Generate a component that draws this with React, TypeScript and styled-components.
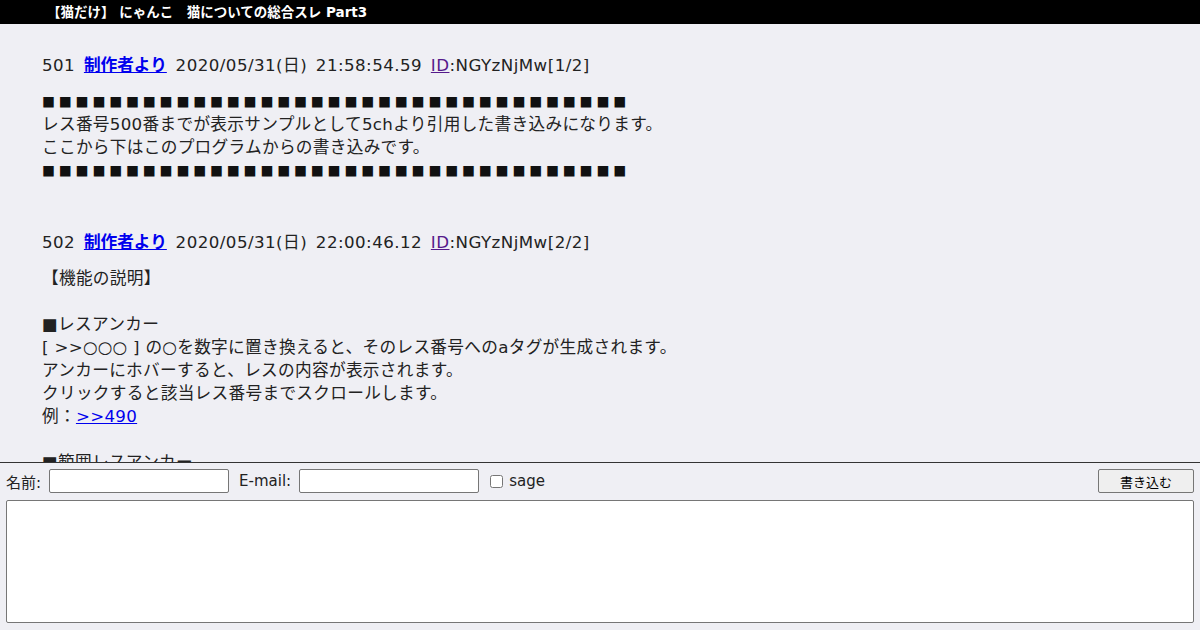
import React from 'react'
import styled, { createGlobalStyle } from 'styled-components'

const GlobalStyle = createGlobalStyle`
  html, body {
    margin: 0;
    padding: 0;
    background: #efeff4;
    color: #222;
    font-family: 'DejaVu Sans', 'Noto Sans CJK JP', sans-serif;
  }
`

const Page = styled.div`
  display: flex;
  flex-direction: column;
  height: 100vh;
  overflow: hidden;
`

const TitleBar = styled.header`
  background: #000;
  color: #fff;
  font-size: 13.5px;
  font-weight: bold;
  height: 24px;
  line-height: 24px;
  padding-left: 47px;
  flex-shrink: 0;
`

const Thread = styled.main`
  flex: 1;
  overflow: hidden;
  padding: 30px 0 0 42px;
  font-size: 16.67px;
  line-height: 23px;
`

const Post = styled.article`
  margin-bottom: 49px;
`

const PostHead = styled.div`
  margin-bottom: 13px;
  white-space: pre;
  letter-spacing: 0.45px;
  word-spacing: 3px;
`

const NameLink = styled.a`
  color: #0000ee;
  font-weight: bold;
  text-decoration: underline;
  letter-spacing: 0;
`

const IdLink = styled.a`
  color: #551a8b;
  text-decoration: underline;
`

const Body = styled.div`
  white-space: pre-wrap;
  letter-spacing: 0.3px;
`

const Anchor = styled.a`
  color: #0000ee;
  text-decoration: underline;
`

const Bar = styled.div`
  font-family: 'Noto Sans CJK JP', sans-serif;
  font-size: 13px;
  letter-spacing: 3.8px;
  color: #111;
`

const PostForm = styled.form`
  flex-shrink: 0;
  border-top: 1px solid #333;
  padding: 6px 6px 7px;
  display: flex;
  flex-direction: column;
  gap: 7px;
  font-size: 15px;
`

const FieldRow = styled.div`
  display: flex;
  align-items: center;
  height: 24px;
`

const Label = styled.label`
  margin-right: 8px;
`

const TextInput = styled.input`
  width: 180px;
  height: 24px;
  box-sizing: border-box;
  border: 1px solid #767676;
  border-radius: 2px;
  background: #fff;
  margin-right: 10px;
`

const SageBox = styled.input`
  width: 13px;
  height: 13px;
  margin: 0 6px 0 1px;
`

const Spacer = styled.div`
  flex: 1;
`

const Submit = styled.button`
  width: 96px;
  height: 24px;
  border: 1px solid #767676;
  border-radius: 2px;
  background: #efefef;
  font-family: inherit;
  font-size: 13px;
  color: #000;
`

const Message = styled.textarea`
  height: 123px;
  box-sizing: border-box;
  border: 1px solid #767676;
  border-radius: 2px;
  background: #fff;
  resize: none;
`

const bar = '■'.repeat(35)

export default function App() {
  return (
    <>
      <GlobalStyle />
      <Page>
        <TitleBar>【猫だけ】 にゃんこ　猫についての総合スレ Part3</TitleBar>
        <Thread>
          <Post>
            <PostHead>
              501 <NameLink href="#">制作者より</NameLink> 2020/05/31(日) 21:58:54.59{' '}
              <IdLink href="#">ID</IdLink>:NGYzNjMw[1/2]
            </PostHead>
            <Body>
              <Bar>{bar}</Bar>
              レス番号500番までが表示サンプルとして5chより引用した書き込みになります。{'\n'}
              ここから下はこのプログラムからの書き込みです。
              <Bar>{bar}</Bar>
            </Body>
          </Post>
          <Post>
            <PostHead>
              502 <NameLink href="#">制作者より</NameLink> 2020/05/31(日) 22:00:46.12{' '}
              <IdLink href="#">ID</IdLink>:NGYzNjMw[2/2]
            </PostHead>
            <Body>
              {'【機能の説明】\n\n■レスアンカー\n[ >>○○○ ] の○を数字に置き換えると、そのレス番号へのaタグが生成されます。\nアンカーにホバーすると、レスの内容が表示されます。\nクリックすると該当レス番号までスクロールします。\n例：'}
              <Anchor href="#">&gt;&gt;490</Anchor>
              {'\n\n■範囲レスアンカー\n'}
            </Body>
          </Post>
        </Thread>
        <PostForm>
          <FieldRow>
            <Label>名前:</Label>
            <TextInput type="text" />
            <Label>E-mail:</Label>
            <TextInput type="text" />
            <SageBox type="checkbox" />
            <span>sage</span>
            <Spacer />
            <Submit type="button">書き込む</Submit>
          </FieldRow>
          <Message />
        </PostForm>
      </Page>
    </>
  )
}
